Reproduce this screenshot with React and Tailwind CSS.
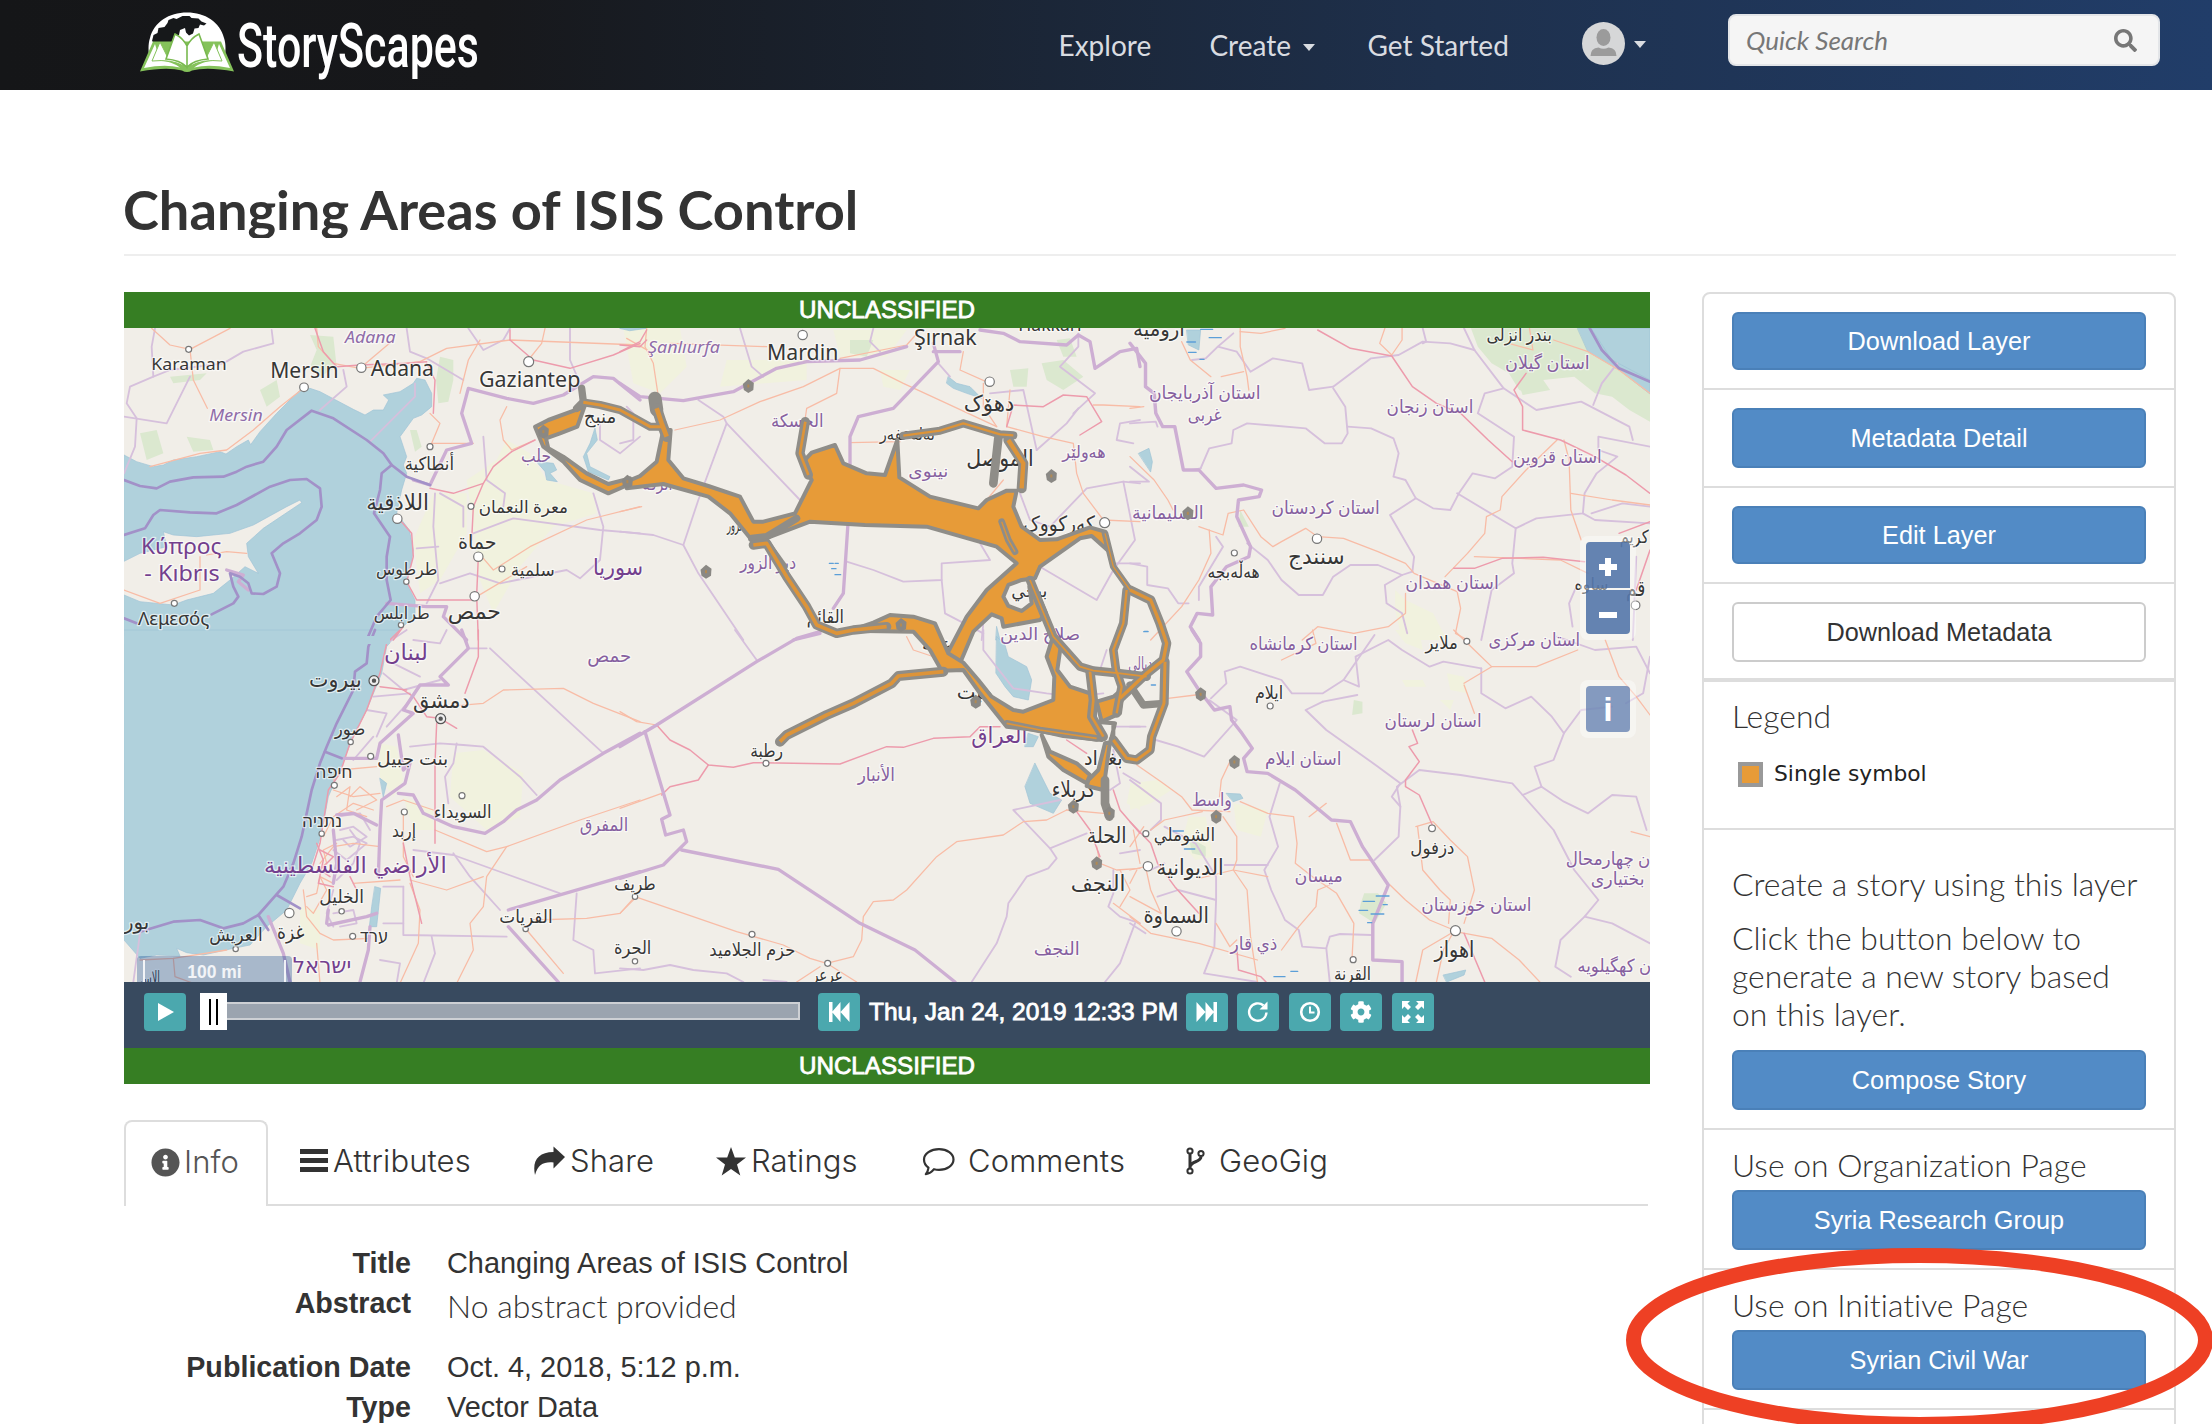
import React from "react";
import { FaCog, FaSearch, FaInfoCircle } from "react-icons/fa";

const HELV = "font-['Liberation_Sans',Arial,sans-serif]";
const LATO = "font-[Lato,sans-serif] [font-variant-ligatures:none]";
const THIN = "font-[Inter,'Liberation_Sans',sans-serif] font-light";

/* ---------- map data: six sheets, each with its own local units ---------- */

const SHEETS = {
  A: { x: 120, y: 280, sx: 1 / 3, sy: 1 / 3 },
  B: { x: 620, y: 280, sx: 1 / 3, sy: 1 / 3 },
  C: { x: 1130, y: 280, sx: 0.34439, sy: 1 / 3 },
  D: { x: 120, y: 630, sx: 1 / 3, sy: 1 / 3 },
  E: { x: 620, y: 630, sx: 1 / 3, sy: 1 / 3 },
  F: { x: 1130, y: 630, sx: 0.34439, sy: 1 / 3 },
};

const STYLES = {
  green: { fill: "#dbe8cf", stroke: "none" },
  pale: { fill: "#f1f2de", stroke: "none" },
  water: { fill: "#b0d1dc", stroke: "#9fc3d6", strokeWidth: 2 },
  land: { fill: "#f1eee8", stroke: "#9fc3d6", strokeWidth: 2 },
  orange: { fill: "none", stroke: "#f8bca6", strokeWidth: 3.8 },
  red: { fill: "none", stroke: "#ed9bac", strokeWidth: 4.4 },
  thin: { fill: "none", stroke: "#d6c0dc", strokeWidth: 5.5 },
  strong: { fill: "none", stroke: "#cdaed3", strokeWidth: 10 },
  sea: { fill: "none", stroke: "#a291c8", strokeWidth: 8 },
  marsh: { fill: "none", stroke: "#5c9fd8", strokeWidth: 4 },
};

const GEO = {
  A: {
    pale: ["1040,600 1130,540 1160,480 1230,520 1280,600 1420,640 1430,700 1300,740 1200,860 1120,1000 1080,900 1060,740", "880,780 940,640 1040,640 1040,760 960,900 900,940"],
    water: ["12,525 50,545 100,560 130,555 160,540 230,530 300,515 318,522 350,500 385,480 392,494 420,455 470,400 540,330 570,325 600,335 700,388 735,405 760,390 790,390 806,360 790,345 840,335 880,310 890,295 915,300 935,340 935,380 905,405 880,415 840,470 860,530 850,555 860,580 845,630 830,700 868,750 880,810 870,870 860,910 885,960 885,1010 835,1050 820,1080 12,1080", "1425,445 1432,480 1400,520 1410,560 1470,590 1465,600 1405,575 1390,530 1410,490", "1250,545 1300,550 1310,570 1290,580 1312,605 1280,600 1275,575"],
    land: ["0,850 60,820 140,800 130,755 160,765 230,770 330,760 400,735 500,680 540,660 545,668 430,745 380,790 385,830 415,880 375,860 330,900 280,940 200,960 160,975 60,965 0,940"],
    green: ["960,230 1000,240 1000,300 985,365 955,370 948,300", "570,165 640,170 650,260 600,290 570,260 590,210", "30,830 80,825 110,880 210,900 215,930 150,940 100,890 40,880", "420,330 470,300 480,350 440,380", "60,460 110,450 130,520 80,540", "200,470 270,480 280,510 220,515", "150,290 260,280 240,300 160,310", "870,450 890,450 905,500 885,515"],
    orange: ["95,145 150,195 210,208 330,145", "210,208 220,300 262,385", "590,145 595,200 640,250 720,265 900,245 980,205 1170,180 1560,195", "720,265 820,180", "1160,380 1140,420 1150,480 1175,510 1245,480", "930,400 960,430 935,490 1060,490", "90,560 240,520 320,510 400,450 480,380 550,325", "1090,835 1120,870 1230,800 1400,720 1560,680", "1070,950 1220,860", "1275,145 1265,190 1225,240", "12,930 120,970 240,930 240,830", "1080,180 1045,240 1020,340", "380,820 320,815 260,825"],
    red: ["585,145 610,215 650,260 720,255 860,250 920,245", "1170,150 1170,180 1240,240 1350,265 1480,225 1560,190", "920,250 945,300 940,400", "1175,515 1120,560 1090,610 1060,680 1055,780", "1090,610 1000,640 930,625", "1075,830 1070,945 1075,1080", "835,715 875,760 880,830 860,905 890,960 1065,960", "820,1080 850,1040", "1245,480 1175,515"],
    thin: ["105,145 95,200 100,290 30,320 20,370 50,415 45,500 12,580", "100,290 150,270 310,250 370,215 460,190 455,150", "12,410 140,430 165,380 210,290", "600,390 680,320 670,270", "750,485 885,350 885,310", "860,145 870,215 920,235 1030,300", "1045,145 1090,210 1150,180 1170,145", "1350,145 1350,240 1380,310", "1090,470 1100,600 1155,640 1150,680", "945,640 940,740 955,900 920,970", "890,805 955,800", "1060,760 1180,715 1440,750 1560,760", "1420,640 1450,740 1440,840 1380,895 1340,870 1140,910 1050,880 960,910", "1440,430 1440,480 1500,520 1560,470", "960,640 1030,680 1030,740"],
    strong: ["1560,360 1480,295 1420,290 1330,345 1240,370 1160,355 1045,325 1025,400 1055,490 980,510 930,615 880,600", "320,870 370,885 355,905 385,930", "800,970 920,980 980,980 970,1010 1040,1080"],
    sea: ["12,600 60,618 110,625 150,605 220,592 310,590 350,575 380,560 430,545 470,500 500,450 575,392 640,415 740,480 790,520 815,555 860,590 930,615", "12,765 75,745 100,705 120,690 210,697 290,700 350,675 450,620 510,600 560,597 600,625 605,680 590,720 540,760 490,790 455,820 480,880 470,920 430,942 395,940 385,910 360,890 330,880 340,920 355,950 340,970 275,1003", "815,555 785,580 780,630 762,700 810,770 800,830 800,900 812,960 770,1010 740,1080", "12,1015 50,1030"],
  },
  B: {
    pale: ["10,145 180,145 200,260 120,340 40,310", "320,240 560,240 560,300 300,320", "640,150 860,150 800,230 660,230", "780,270 870,270 840,330 790,320"],
    green: ["1170,270 1225,265 1220,320 1180,320", "1265,250 1330,240 1390,290 1330,330 1280,300", "690,180 760,180 740,230 690,220", "1310,180 1350,175 1370,230 1330,230"],
    water: ["985,290 1010,310 1050,320 1085,355 1040,340 1000,325 980,310", "0,145 80,145 30,152", "1130,1040 1140,1080 1128,1080"],
    orange: ["80,145 75,200 100,250 115,350", "165,450 300,420 420,365 550,320 660,265 760,265 850,310 980,370 1130,440", "660,265 650,340 560,385 555,420", "20,175 90,215", "150,190 440,200", "690,488 840,485", "1030,215 1020,270 1110,310", "1170,330 1160,440 1270,470 1360,490 1370,580 1390,640 1450,720", "1560,380 1450,375 1420,375", "0,695 65,680", "660,235 860,195 900,150", "1090,310 1090,380 1130,440", "1100,660 1150,600", "1450,720 1560,725"],
    red: ["0,215 60,185 80,150", "1160,440 1180,375 1270,380 1330,345 1400,350 1445,425 1380,465", "0,195 60,200 80,180"],
    thin: ["360,145 395,260 430,290", "235,360 310,410 320,430 540,660", "320,430 235,660 190,795", "0,755 100,765 190,795 235,880 370,1080", "680,845 760,870 850,905 965,900 965,850 1110,840 1080,790", "965,900 975,1000 1090,1060", "1250,510 1340,430 1375,385", "1250,510 1210,330 1110,340", "1375,160 1375,200 1320,260 1425,340 1360,400", "1200,640 1230,720 1290,740 1400,625 1510,605 1560,610", "1510,605 1545,780 1480,870 1430,960 1260,860", "760,145 750,185 780,215", "955,250 990,290", "1560,420 1500,430 1490,480 1540,490", "0,490 40,480 40,400 20,380", "1480,850 1560,850", "1085,1080 1090,1030"],
    strong: ["0,310 60,350 190,362 340,335 470,265 560,245 720,240 860,200", "940,190 955,245 820,385 715,410 690,470 690,640 670,940 640,985", "940,215 1020,215", "1080,150 1150,160 1200,185 1340,195 1375,165 1410,185 1425,265 1500,215 1550,205 1560,260", "520,1080 600,1060"],
    marsh: ["628,850 640,850", "645,850 655,850", "635,866 648,866", "645,884 662,884"],
  },
  C: {
    green: ["990,145 1300,145 1330,200 1420,260 1510,320 1510,425 1450,390 1400,350 1350,340 1290,290 1200,300 1160,340 1130,330 1100,280 1050,250 1010,200", "1125,300 1200,300 1220,330 1140,345", "320,690 345,740 315,740"],
    pale: ["770,930 800,960 880,1000 920,1080 790,1080 770,990"],
    water: ["1300,145 1510,145 1510,342 1420,270 1330,215", "165,150 205,150 200,210 170,195", "25,520 55,505 65,545 60,575", "1340,145 1510,145 1510,300 1400,240"],
    orange: ["150,185 175,240 235,290", "320,145 320,200 340,290 345,330", "265,290 330,275", "320,155 380,160 450,145", "740,145 725,190 760,225 790,180 790,145", "1230,180 1330,215 1420,270 1510,340", "0,530 70,600 110,660 125,690", "200,740 270,765 285,700 330,690 380,770 415,800 440,785 510,745 545,770 620,775 720,815 800,850 825,880 950,935 960,985 945,1060 980,1080", "915,890 980,820 1030,760 1035,710 1075,690 1080,650 1150,570 1240,480", "1260,480 1275,540 1280,690 1310,780", "1280,640 1400,660 1510,675", "800,940 800,1000 750,1040 650,1060 545,1040 500,1080", "230,750 235,820 200,900 150,980 60,1080", "0,385 40,380", "1000,830 1250,840 1330,880", "1100,190 1170,210 1160,145"],
    red: ["545,150 640,205 760,228 820,320 890,370 960,400 1040,480 1110,545", "1150,280 1115,330 1140,380 1140,450 1250,480 1350,530 1440,585 1510,640", "940,865 1000,865 1080,835 1200,832 1320,845", "1470,930 1510,810", "1420,760 1510,725"],
    thin: ["300,160 255,200 220,235 180,240", "255,200 310,215 350,275 415,235 500,250 520,330 590,320", "590,320 700,235 780,225 850,185 930,190 1000,210", "590,325 625,380 632,460 615,490 565,490 510,445 340,430 300,450 295,490 230,505 205,565", "632,440 700,445 765,475 780,520 765,590 800,600 830,655 755,705 825,830 820,875", "830,655 880,685 930,690 955,640 995,580 1060,595 1110,560 1115,470 1010,400 1030,340 1085,325", "1000,210 1085,325 1180,390 1310,365 1450,440 1460,480", "1345,375 1370,310 1415,250", "1510,500 1360,470 1360,510 1415,530 1355,580 1320,640 1315,700 1180,715 1120,745 950,640", "1340,700 1430,670 1510,680", "1120,745 1110,850 1115,880 1050,930 1020,1080", "340,790 400,840 440,900 490,945 560,945 590,890 640,855 720,855 790,885 820,875", "790,885 740,915 745,970 790,1000 805,1060", "0,850 50,860 50,915 110,925 140,970 170,970", "250,770 270,800 200,920 200,960", "0,605 55,605 0,560", "1285,1040 1275,970 1300,910", "1470,830 1460,1080", "850,145 860,185 850,190", "205,565 180,570", "1315,700 1350,720 1510,730", "970,145 1000,210", "0,430 75,425 80,440"],
    strong: ["0,190 45,250 45,320 70,340 75,400 95,440 130,440 155,570 200,570 250,625 330,615 382,630 375,650 315,660 310,710 350,800 345,830 280,860 235,920 240,1005 195,1000 175,1040 200,1080"],
    sea: ["1335,145 1370,210 1420,265 1510,305"],
    marsh: ["205,148 240,148", "230,173 265,173", "165,186 190,186", "170,217 192,217", "203,238 215,238", "42,1054 52,1054"],
  },
  D: {
    pale: ["780,340 830,350 850,450 820,500 780,440", "1000,370 1090,360 1210,430 1200,560 1100,600 990,500", "850,500 940,540 940,600 880,600", "540,830 600,840 600,960 540,940"],
    water: ["12,0 840,0 800,50 785,130 740,240 700,320 655,430 625,500 605,610 575,700 540,760 500,840 440,890 390,945 340,955 250,975 200,968 170,955 180,978 110,975 60,985 12,930", "780,445 800,460 790,500", "765,770 782,775 770,890 748,890 755,830"],
    orange: ["945,600 1100,665 1160,650 1380,570 1560,510", "1160,650 1100,740 1090,830 1050,880 1060,960 1010,1060", "870,760 900,840 895,940 840,1060", "1550,800 1500,850 1400,865 1240,870", "1220,900 1330,1030", "975,230 1090,220 1150,180 1330,175 1420,220 1560,275", "640,480 700,500 780,490", "610,620 640,560 700,520 760,540", "550,780 560,860 600,910 640,930 750,925", "600,740 620,780 580,850 560,830", "640,450 660,420 770,410", "850,540 850,680 880,740", "600,700 640,650 700,640 780,650", "870,750 980,780 1090,740", "800,530 850,510 940,540", "60,990 160,985 320,960", "160,985 165,1040 220,1060", "690,500 720,470 770,510 710,540", "590,940 600,1060", "700,760 840,750", "650,500 690,470 680,540 740,560", "590,720 620,700 610,660 650,640", "560,800 590,790 600,740 640,760"],
    red: ["1075,0 1075,80 1035,190", "840,0 800,40 780,130 740,240 690,340 660,430 625,480 600,640 575,720", "950,280 945,400 945,640", "590,640 610,690 595,760 640,770", "850,640 870,740 905,880", "850,180 880,200 920,260 960,265 1010,295", "690,740 710,780 700,760", "780,170 860,180", "600,660 640,680 600,720 630,740"],
    thin: ["1110,55 1190,130 1450,370", "1045,55 1100,55", "790,130 850,180 960,150", "870,350 960,340 1030,345 1090,350 1200,440 1250,495", "1010,340 1000,400 975,440 985,520", "740,240 800,250 770,320", "880,200 800,290", "880,660 1000,675 1320,790", "1000,670 1050,740 1140,840", "850,770 850,915 1160,920", "935,920 945,970 910,1060", "790,770 850,770", "790,880 850,880", "1370,790 1360,930 1420,960 1425,1030 1560,1015", "650,560 720,550 750,600", "650,630 700,620 740,640 680,690 640,660", "640,780 620,850 640,890", "690,600 720,640 700,700 650,750", "700,390 760,320", "40,1056 60,910", "780,990 840,1000 830,1060", "800,40 860,0", "880,30 960,40 980,0", "820,100 900,140", "760,200 870,190", "640,850 700,840 710,880 660,890", "660,600 700,590 740,620 690,650 670,630"],
    strong: ["1025,0 1045,55 960,140 985,165 900,165 850,240 880,250 780,340 770,385 670,385", "835,315 850,420 870,400 855,460 785,510 780,600 775,740", "835,490 880,495 910,550 1000,590 1095,610 1150,575 1190,540 1250,510 1320,450 1450,370 1560,310", "625,885 740,860 770,850", "650,555 700,550 770,585", "750,890 745,960 720,1056", "1560,725 1165,840", "1165,890 1315,1056", "445,860 490,970 510,1056", "640,600 650,700 640,760", "620,880 625,840"],
    sea: ["765,0 745,50 740,100 705,125 700,180 650,280 620,350 600,400 575,480 545,620 520,700 490,770 415,855 370,880 310,895 240,870 160,875 60,905", "615,365 665,385", "470,795 540,835", "415,855 445,900"],
  },
  E: {
    water: ["1130,20 1155,45 1165,80 1220,110 1235,150 1225,210 1180,200 1155,170 1128,130", "1245,400 1265,440 1290,490 1325,510 1300,550 1230,520 1215,470", "1225,310 1255,320 1240,350 1215,350"],
    pale: ["1530,470 1560,480 1560,540 1520,520"],
    orange: ["0,245 50,275 110,285", "0,535 125,490", "45,800 350,905 490,945 570,985 620,1000", "0,850 45,800", "620,1000 700,980 725,930 730,860 760,815 820,810 860,780 950,680 1010,635 1150,615 1210,575 1280,570 1340,540", "620,1000 710,1056", "600,1010 530,1056", "1430,650 1440,700 1490,720 1560,715", "1480,820 1560,880", "860,20 880,60 970,90", "1340,540 1450,550", "1500,720 1530,780 1500,830", "1540,600 1560,700"],
    red: ["110,285 150,330 210,360 265,405 340,412 400,398 520,400 660,402 800,350 850,352 940,325 1050,320 1080,290 1140,290", "265,405 235,450 150,470 125,495", "1370,545 1410,600 1440,680", "1480,480 1500,540 1560,610", "1340,330 1400,370"],
    thin: ["345,0 410,90", "1090,0 1090,60 1180,175 1280,190 1360,200 1450,190", "1320,510 1180,540 1290,655 1310,685 1285,715 1220,740 1165,820 1160,860 1130,940 1055,1056", "1290,655 1400,610", "1545,880 1500,1000 1455,1056", "1480,720 1480,790 1465,830 1500,860 1560,880", "0,1015 70,1020 150,1005 220,1020 320,1030 370,1056", "430,1050 500,1056", "1480,360 1500,460 1470,480", "1490,290 1560,290", "1510,430 1560,460", "1440,120 1460,60", "1500,670 1560,660"],
    strong: ["0,350 110,285 410,95 530,25 600,5", "75,305 150,555 125,568 137,615 190,600 200,635 130,705 0,745", "185,660 475,718 720,880 885,960 1005,1056"],
  },
  F: {
    pale: ["0,460 80,450 120,480 60,520 0,540", "170,560 220,560 240,680 190,690 150,640", "790,150 850,150 860,170 800,170", "770,0 840,0 850,60 800,40", "920,130 970,140 980,190 930,180", "900,210 940,210 930,240", "300,520 400,540 380,620 310,600"],
    green: ["680,790 720,790 745,820 710,880 665,850 670,820", "650,210 675,215 675,250 645,255", "170,620 220,650 220,680 180,670"],
    water: ["280,490 320,492 328,505 300,515", "910,1035 975,1020 970,1035 920,1056"],
    orange: ["110,205 190,195", "20,405 90,455 150,500 180,540 290,545", "290,395 265,450 260,500", "210,545 100,570 60,600", "270,560 310,620 310,690 300,720 340,780 350,920 370,1056", "320,515 400,550 475,560 485,640 480,700 530,740 600,790 650,880 645,980", "200,745 300,720 400,740", "440,960 490,890 540,830 545,780 580,765", "830,590 880,575 930,630 980,680 1000,780 970,880", "835,590 850,720 900,780 930,810 925,880", "755,765 800,810 870,870 940,900", "940,905 850,960 830,1056", "945,905 1050,925 1130,990 1190,1056", "940,905 910,960 890,1056", "970,160 1050,110 1180,110 1300,60", "1000,250 970,165", "1380,30 1420,140 1470,200 1510,255", "0,720 45,710 60,780 90,850", "90,850 0,800", "530,0 540,40 440,90", "1455,605 1510,620", "600,580 640,690 700,690", "0,860 60,910 200,940 370,990", "940,0 1000,60 1050,110", "40,590 0,650", "520,560 570,520", "20,720 0,760", "250,880 290,950 310,930"],
    red: ["820,300 835,340 810,350 840,395 800,450 800,470 840,495 880,590", "0,575 60,640 80,700 130,770 200,850", "310,950 315,1020 380,1040 395,1056", "970,910 1030,1056"],
    thin: ["230,210 310,270 215,380 140,350 75,330", "235,205 280,160 275,125 320,110 440,150 470,190 560,190 620,150 665,170 655,80 750,30 790,60 870,110 910,95 1020,115", "710,15 680,60 620,150", "560,215 510,240 570,300 720,410 785,460 760,500 785,530 780,620 710,690", "560,215 660,195", "785,530 775,470 840,420 960,435 1110,460 1140,495 1195,470 1260,515 1330,550 1400,495 1470,500 1500,600", "1140,495 1230,600 1290,720 1360,810 1320,860 1250,930 1235,1010 1280,1040", "1320,860 1400,880 1510,940", "1195,470 1175,410 1230,390 1260,310 1225,260 1165,200 1090,235 1020,190 1020,115", "1260,310 1310,240 1400,230", "435,460 405,560 430,650 390,720 410,780 450,870 490,900 500,950 570,955 580,1056", "275,705 400,705", "570,955 580,920 610,912 700,915", "60,720 100,700", "80,800 140,780 250,810 245,950 215,1030 370,1056", "0,450 90,520 90,570 60,600", "250,810 250,740 190,640 100,590", "0,290 45,290", "45,910 0,880", "1510,80 1490,190 1440,220", "1050,930 1020,0", "1240,20 1350,60 1470,50 1510,130"].filter((p) => p !== "1050,930 1020,0"),
    strong: ["180,0 205,40 205,80 165,125 200,180 245,240 290,230 295,270 325,310 355,355 330,385 340,425 400,430 480,480 585,570 640,575 675,650 750,765 705,880 705,990 790,995 790,1056"],
    marsh: ["125,603 155,603", "158,657 188,657", "677,814 710,814", "715,798 752,798", "735,824 747,824", "665,841 690,841", "700,852 737,852", "690,878 702,878", "467,1024 487,1024", "418,1040 450,1040", "40,5 52,5", "62,165 74,165"],
  },
};

const ORDER = ["pale", "green", "water", "land", "thin", "orange", "red", "strong", "sea", "marsh"];
const CLOSED = new Set(["pale", "green", "water", "land"]);

/* control areas, in sheet B units */
const AREAS = [
  "20,605 60,588 110,545 130,450 152,450 145,540 190,595 265,618 360,650 400,725 430,725 525,700 575,600 545,550 575,518 645,495 670,550 740,580 795,585 832,480 838,592 930,650 1075,685 1100,660 1160,632 1190,632 1180,680 1205,740 1260,780 1310,778 1410,742 1455,755 1462,810 1415,768 1380,775 1260,860 1245,895 1205,900 1165,915 1150,950 1165,978 1205,993 1235,970 1228,920 1250,935 1278,1000 1260,1020 1150,1040 1145,1015 1115,1003 1060,1055 1020,1150 965,1150 985,1115 1040,1010 1100,930 1190,850 1130,800 920,740 735,735 570,725 430,778 395,780 330,700 265,650 130,612 20,625",
  "690,1052 760,1028 810,1005 880,1010 945,1030 985,1120 1030,1148 1075,1200 1115,1250 1180,1290 1210,1295 1300,1260 1303,1190 1280,1130 1300,1065 1322,1100 1312,1170 1350,1220 1425,1245 1425,1320 1445,1380 1330,1368 1250,1350 1160,1340 1080,1240 1030,1170 965,1172 930,1110 880,1055",
  "1430,1265 1480,1250 1510,1225 1500,1300 1445,1325",
  "1425,1325 1480,1330 1480,1385 1455,1390 1435,1470 1405,1500 1400,1518 1450,1530 1468,1400 1485,1330",
  "1265,1365 1290,1415 1370,1450 1410,1485 1400,1510 1330,1470 1285,1430",
  "-255,440 -215,420 -120,385 -105,375 -128,440 -180,460 -222,475 -215,505 -170,530 -100,580 -35,612 30,595 30,612 -35,640 -120,600 -170,545 -230,500",
];
const BANDS = [
  { p: "-115,325 -110,365 -130,385", w: 22, i: 0 },
  { p: "-110,367 -60,375 0,390 90,440 130,440", w: 24, i: 9 },
  { p: "105,355 110,390", w: 40, i: 0 },
  { p: "110,385 125,430 140,470", w: 32, i: 14 },
  { p: "556,425 540,520 565,585", w: 28, i: 8 },
  { p: "395,775 440,770 530,715", w: 22, i: 0 },
  { p: "400,795 440,790 500,890 560,980 590,1035 650,1060 700,1050 800,1040", w: 28, i: 11 },
  { p: "440,790 490,860", w: 24, i: 0 },
  { p: "850,467 960,452 1030,430 1140,463 1180,466", w: 24, i: 7 },
  { p: "1135,475 1120,610", w: 26, i: 0 },
  { p: "1165,480 1210,550 1205,625", w: 30, i: 13 },
  { p: "1145,725 1165,780 1185,815", w: 20, i: 4 },
  { p: "480,1385 500,1365 620,1305 700,1270 815,1210 835,1188 970,1175", w: 30, i: 11 },
  { p: "480,1385 500,1365 610,1310", w: 26, i: 0 },
  { p: "1455,760 1480,860 1530,930", w: 20, i: 4 },
  { p: "1520,930 1510,1030 1480,1110 1488,1170 1505,1220 1490,1300", w: 26, i: 7 },
  { p: "1530,930 1592,960 1620,1030 1640,1090 1630,1140 1580,1180 1500,1255", w: 28, i: 10 },
  { p: "1635,1145 1632,1270 1595,1370 1590,1410 1550,1440 1520,1435 1480,1380", w: 28, i: 9 },
  { p: "1230,900 1275,1010 1300,1070 1380,1160 1420,1172 1500,1180 1580,1190", w: 26, i: 5 },
  { p: "1410,1175 1420,1260 1415,1310 1450,1370", w: 28, i: 8 },
  { p: "1530,1215 1570,1275 1632,1270", w: 22, i: 0 },
  { p: "1455,1500 1455,1570 1468,1610", w: 26, i: 0 },
  { p: "1160,1330 1260,1350 1430,1375", w: 20, i: 5 },
];
const SPOTS = [
  ["B", 385, 318], ["B", 258, 875], ["B", 1294, 588], ["B", 843, 1035], ["C", 168, 700], ["E", 1067, 215], ["E", 1360, 530],
  ["E", 1430, 700], ["E", 1468, 550], ["F", 205, 193], ["F", 303, 396], ["F", 250, 560], ["A", 1270, 455], ["A", 1522, 605],
];

/* places: sheet, x, y, radius */
const PLACES = [
  ["A", 206, 208, 9], ["A", 552, 322, 13], ["A", 724, 263, 14], ["A", 1226, 245, 15], ["A", 930, 500, 9], ["A", 832, 716, 14],
  ["A", 1053, 679, 9], ["A", 1075, 830, 14], ["A", 1146, 867, 9], ["A", 859, 905, 8], ["A", 1064, 949, 14], ["A", 163, 970, 9], ["A", 843, 1035, 8],
  ["B", 548, 165, 14], ["B", 1109, 305, 14], ["B", 1454, 728, 15], ["C", 543, 776, 14], ["C", 303, 819, 9], ["C", 1468, 976, 13],
  ["D", 692, 336, 8], ["D", 752, 379, 9], ["D", 643, 466, 9], ["D", 1026, 497, 9], ["D", 853, 546, 9], ["D", 605, 611, 8], ["D", 665, 844, 8],
  ["D", 508, 849, 14], ["D", 698, 919, 9], ["D", 347, 957, 8], ["D", 1545, 800, 8], ["D", 1217, 897, 8], ["D", 1545, 994, 8],
  ["E", 438, 400, 9], ["E", 396, 913, 9], ["E", 623, 1000, 9], ["F", 978, 34, 9], ["F", 407, 228, 9], ["F", 877, 595, 10], ["F", 46, 611, 9],
  ["F", 52, 709, 14], ["F", 135, 904, 14], ["F", 945, 902, 15], ["F", 648, 989, 9],
];

/* labels: sheet, text, centre x, baseline, width, font size, kind (c city, p province, i italic, n nation) */
const LABELS = [
  ["A", "Karaman", 207, 267, 226, 17, "c"], ["A", "Mersin", 553, 292, 205, 22, "c"], ["A", "Adana", 847, 287, 190, 22, "c"],
  ["A", "Adana", 751, 186, 152, 17, "i"], ["A", "Mersin", 348, 422, 160, 17, "i"], ["A", "Gaziantep", 1229, 318, 304, 21, "c"],
  ["A", "منبج", 1440, 428, 98, 18, "c"], ["A", "أنطاكية", 928, 568, 148, 18, "c"], ["A", "حلب", 1248, 545, 90, 18, "p"],
  ["A", "اللاذقية", 833, 688, 188, 22, "c"], ["A", "معرة النعمان", 1210, 697, 268, 17, "c"], ["A", "حماة", 1072, 804, 116, 20, "c"],
  ["A", "Κύπρος", 184, 820, 242, 22, "n"], ["A", "- Kıbrıs", 186, 900, 226, 22, "n"], ["A", "طرطوس", 860, 882, 184, 17, "c"],
  ["A", "سلمية", 1238, 887, 132, 17, "c"], ["A", "سوريا", 1494, 882, 150, 22, "n"], ["A", "Λεμεσός", 161, 1032, 214, 18, "c"],
  ["A", "طرابلس", 845, 1014, 168, 17, "c"], ["A", "حمص", 1063, 1014, 160, 22, "c"],
  ["B", "Şanlıurfa", 192, 218, 216, 17, "i"], ["B", "Mardin", 548, 238, 214, 21, "c"], ["B", "Şırnak", 976, 192, 188, 21, "c"],
  ["B", "Hakkâri", 1290, 152, 190, 20, "c"], ["B", "دهۆک", 1107, 390, 152, 22, "c"], ["B", "الحسكة", 532, 440, 158, 18, "p"],
  ["B", "تەلەعفەر", 862, 478, 165, 17, "c"], ["B", "نينوى", 925, 588, 120, 17, "p"], ["B", "الموصل", 1140, 556, 202, 23, "c"],
  ["B", "هەولێر", 1392, 532, 130, 17, "p"], ["B", "الرقة", 112, 628, 90, 17, "p"], ["B", "دير الزور", 366, 750, 90, 17, "c"],
  ["B", "کەرکووک", 1317, 752, 215, 21, "c"], ["B", "دير الزور", 444, 864, 168, 18, "p"], ["B", "بيجي", 1228, 948, 108, 18, "c"],
  ["B", "القائم", 616, 1028, 112, 19, "c"], ["B", "صلاح الدين", 1260, 1078, 240, 17, "p"],
  ["C", "ارومیه", 84, 166, 150, 20, "c"], ["C", "بندر انزلی", 1130, 182, 190, 18, "c"], ["C", "استان گیلان", 1212, 266, 246, 18, "p"],
  ["C", "استان آذربایجان", 217, 356, 324, 18, "p"], ["C", "غربی", 217, 420, 98, 18, "p"], ["C", "استان زنجان", 871, 398, 252, 18, "p"],
  ["C", "استان قزوین", 1241, 546, 258, 18, "p"], ["C", "السليمانية", 110, 714, 208, 18, "p"], ["C", "استان کردستان", 568, 700, 314, 18, "p"],
  ["C", "سنندج", 541, 850, 164, 22, "c"], ["C", "هەڵەبجە", 301, 892, 152, 18, "c"], ["C", "استان همدان", 935, 926, 272, 18, "p"],
  ["C", "کریم", 1464, 786, 84, 18, "c"], ["C", "قم", 1468, 946, 56, 22, "c"], ["C", "ساوه", 1340, 928, 98, 17, "c"],
  ["D", "لبنان", 858, 88, 132, 22, "n"], ["D", "بيروت", 646, 168, 158, 22, "c"], ["D", "حمص", 1468, 94, 132, 18, "p"],
  ["D", "دمشق", 964, 232, 170, 22, "c"], ["D", "صور", 690, 314, 92, 18, "c"], ["D", "بنت جبيل", 878, 404, 214, 18, "c"],
  ["D", "חיפה", 642, 442, 112, 19, "c"], ["D", "السويداء", 1028, 562, 174, 18, "c"],
  ["D", "נתניה", 606, 588, 122, 19, "c"], ["D", "إربد", 852, 618, 72, 18, "c"], ["D", "المفرق", 1452, 602, 146, 18, "p"],
  ["D", "الأراضي الفلسطينية", 706, 726, 548, 22, "n"], ["D", "الخليل", 665, 818, 134, 18, "c"], ["D", "القريات", 1218, 876, 160, 18, "c"],
  ["D", "بور", 50, 896, 76, 20, "c"], ["D", "العريش", 348, 932, 160, 18, "c"], ["D", "غزة", 512, 924, 82, 20, "c"],
  ["D", "ערד", 762, 934, 86, 19, "c"], ["D", "ישראל", 606, 1028, 176, 22, "n"], ["D", "الإس", 90, 1062, 60, 20, "c"],
  ["E", "رطبة", 440, 380, 98, 18, "c"], ["E", "الأنبار", 769, 450, 112, 18, "p"], ["E", "هيت", 1064, 204, 108, 20, "c"],
  ["E", "العراق", 1138, 336, 168, 22, "n"], ["E", "بغداد", 1450, 402, 116, 20, "c"], ["E", "كربلاء", 1361, 500, 132, 22, "c"],
  ["E", "الحلة", 1460, 638, 120, 22, "c"], ["E", "النجف", 1434, 782, 164, 22, "c"], ["E", "النجف", 1310, 974, 138, 18, "p"],
  ["E", "طريف", 45, 778, 124, 18, "c"], ["E", "حزم الجلاميد", 397, 976, 258, 18, "c"], ["E", "الحرة", 38, 970, 112, 18, "c"],
  ["E", "عرعر", 622, 1050, 92, 18, "c"], ["E", "عنه", 950, 58, 90, 17, "c"],
  ["F", "استان کرمانشاه", 504, 58, 314, 18, "p"], ["F", "ملایر", 905, 54, 94, 18, "c"], ["F", "استان مرکزی", 1174, 46, 266, 18, "p"],
  ["F", "ایلام", 404, 204, 82, 18, "c"], ["F", "استان لرستان", 880, 290, 282, 18, "p"], ["F", "استان ایلام", 503, 404, 222, 18, "p"],
  ["F", "واسط", 238, 526, 116, 18, "p"], ["F", "الشوملي", 158, 630, 178, 18, "c"], ["F", "الديوانية", 174, 734, 196, 22, "c"],
  ["F", "دزفول", 878, 670, 128, 18, "c"], ["F", "میسان", 548, 754, 140, 18, "p"], ["F", "السماوة", 134, 876, 190, 22, "c"],
  ["F", "استان خوزستان", 1006, 840, 320, 18, "p"], ["F", "ذي قار", 360, 958, 136, 18, "p"], ["F", "اهواز", 942, 980, 116, 22, "c"],
  ["F", "القرنة", 646, 1048, 108, 18, "c"], ["F", "ن چهارمحال", 1388, 702, 246, 18, "p"], ["F", "بختیاری", 1416, 764, 156, 18, "p"],
  ["F", "ن کهگیلویه", 1406, 1024, 214, 18, "p"], ["F", "ديالى", 30, 118, 70, 18, "p"],
];

const LABEL_COLOR = { c: "#363636", p: "#8660a0", i: "#8f6ca9", n: "#733f8e" };

function at(sheet, x, y) {
  const s = SHEETS[sheet];
  return [s.x + x * s.sx, s.y + y * s.sy];
}

function MapCanvas() {
  return (
    <svg className="block h-[654px] w-[1526px]" viewBox="124 328 1526 654" strokeLinejoin="round" strokeLinecap="round">
      <rect x="124" y="328" width="1526" height="654" fill="#f1eee8" />
      {ORDER.map((kind) =>
        Object.keys(SHEETS).map((id) => {
          const s = SHEETS[id];
          return (
            <g key={kind + id} transform={`translate(${s.x} ${s.y}) scale(${s.sx} ${s.sy})`} {...STYLES[kind]}>
              {(GEO[id][kind] || []).map((pts, i) =>
                CLOSED.has(kind) ? <polygon key={i} points={pts} /> : <polyline key={i} points={pts} />
              )}
            </g>
          );
        })
      )}
      {/* the sea continues across the sheet boundary */}
      <rect x="124" y="636" width="266" height="8" fill="#b0d1dc" />
      {PLACES.map(([s, x, y, r], i) => {
        const [cx, cy] = at(s, x, y);
        return <circle key={i} cx={cx} cy={cy} r={r / 3} fill="#fff" stroke="#777" strokeWidth="1.2" />;
      })}
      {[["D", 762, 152], ["D", 962, 266]].map(([s, x, y]) => {
        const [cx, cy] = at(s, x, y);
        return (
          <g key={x} fill="#eee" stroke="#555" strokeWidth="1.2">
            <circle cx={cx} cy={cy} r="5" />
            <circle cx={cx} cy={cy} r="1.6" fill="#555" />
          </g>
        );
      })}
      {LABELS.map(([s, text, x, y, w, size, kind], i) => {
        const [cx, by] = at(s, x, y);
        return (
          <text
            key={i}
            x={cx}
            y={by + 0.8}
            textAnchor="middle"
            textLength={w * SHEETS[s].sx}
            lengthAdjust="spacingAndGlyphs"
            fontSize={size}
            fontStyle={kind === "i" ? "italic" : "normal"}
            fill={LABEL_COLOR[kind]}
            stroke="#ffffff"
            strokeOpacity="0.6"
            strokeWidth="2.6"
            paintOrder="stroke"
            className="font-['Noto_Sans','DejaVu_Sans',sans-serif]"
          >
            {text}
          </text>
        );
      })}
      <g transform="translate(620 280) scale(.33333)">
        <g fill="#e79b38" stroke="#8f8d88" strokeWidth="12">
          {AREAS.map((p, i) => (
            <polygon key={i} points={p} />
          ))}
        </g>
        <g fill="none" stroke="#8f8d88">
          {BANDS.map((b, i) => (
            <polyline key={i} points={b.p} strokeWidth={b.w} />
          ))}
        </g>
        <g fill="none" stroke="#dd9439" strokeLinecap="butt">
          {BANDS.filter((b) => b.i > 0).map((b, i) => (
            <polyline key={i} points={b.p} strokeWidth={b.i} />
          ))}
        </g>
      </g>
      {SPOTS.map(([s, x, y], i) => {
        const [cx, cy] = at(s, x, y);
        return (
          <g key={i}>
            <polygon points={`${cx - 5.5},${cy - 2} ${cx},${cy - 7} ${cx + 5.5},${cy - 3} ${cx + 5},${cy + 4} ${cx},${cy + 7} ${cx - 4.5},${cy + 4}`} fill="#8a8884" />
            <rect x={cx - 1} y={cy - 1.5} width="2" height="3" fill="#b08a55" />
          </g>
        );
      })}
    </svg>
  );
}

/* ---------- icons ---------- */

function Logo() {
  return (
    <svg className="block h-[90px] w-[360px] overflow-visible" viewBox="130 0 360 90">
      <path d="M150 60C148 52 148 44 150 38C154 22 169 12.500 187 12.500S220 22 224 38C226 44 226 52 224 60Z" fill="#fff" />
      <g fill="#16181a">
        <path d="M152 41l1.500-6 4-2 1-5 6-1 3-4 1-3 5-2 3 1 6-3 7 0 2 2 7 .5 3 3 5 2-2.500 2-4-1-1.500 3.500-4 .5-1.500 5-4 2-3-3-1-4.500-5 2-1 5-5 2-2 5-5 1.500-6 5-4-1-2-4z" />
        <path d="M210.500 46l4 .5 3.500 4-4.500-.5z" />
      </g>
      <path d="M153 41.500L140 71.500q27-5 42-1 5 3 10 0 15-4 42 1L221 41.500z" fill="#85c25b" />
      <path d="M155 44l-11 24q21-4 36-.5q-8-6-20-7zM219 44l11 24q-21-4-36-.5q8-6 20-7z" fill="#fff" />
      <path d="M160 42l-8 19q19-2 32 5q-5-8-17-10zM214 42l8 19q-19-2-32 5q5-8 17-10z" fill="#fff" stroke="#85c25b" strokeWidth="1" />
      <path d="M175 34L166 59q14 1 21 8V46q-4-8-12-12zM199 34l9 25q-14 1-21 8V46q4-8 12-12z" fill="#fff" stroke="#79b94f" strokeWidth="1.600" />
      <text x="237" y="66.500" fontSize="61" fontWeight="500" fill="#fff" textLength="242" lengthAdjust="spacingAndGlyphs" className="font-[Roboto,sans-serif]">
        StoryScapes
      </text>
    </svg>
  );
}

const Caret = () => (
  <svg className="block h-[7px] w-[12px]" viewBox="0 0 12 7"><path d="M0 0h12L6 7z" fill="#d9dce1" /></svg>
);

function Avatar() {
  return (
    <svg className="block size-[43px]" viewBox="0 0 43 43">
      <circle cx="21.500" cy="21.500" r="21.500" fill="#d6d7d8" />
      <ellipse cx="21.500" cy="15.500" rx="7" ry="8.500" fill="#9b9b9b" />
      <path d="M8.500 34q0-8 8-8.500q5 2.500 10 0q8 .5 8 8.500z" fill="#9b9b9b" />
    </svg>
  );
}

const Skip = ({ flip }) => (
  <svg className={flip ? "size-[22px] -scale-x-100" : "size-[22px]"} viewBox="0 0 22 22" fill="#fff">
    <path d="M1 1h3.500v20H1zM12.500 1v20L4 11zM21.500 1v20L12.500 11z" />
  </svg>
);
const Reload = () => (
  <svg className="size-[24px]" viewBox="0 0 24 24">
    <path d="M20.500 12.500A8.700 8.700 0 1 1 17.500 5.500" fill="none" stroke="#fff" strokeWidth="2.400" />
    <path d="M21.500 1.500v8H13.500z" fill="#fff" />
  </svg>
);
const Clock = () => (
  <svg className="size-[24px]" viewBox="0 0 24 24" fill="none" stroke="#fff">
    <circle cx="12" cy="12" r="8.800" strokeWidth="2.600" />
    <path d="M12 6.500V12.500h4.500" strokeWidth="2" />
  </svg>
);
const Expand = () => (
  <svg className="size-[24px]" viewBox="0 0 24 24" fill="#fff">
    {[0, 90, 180, 270].map((a) => (
      <path key={a} transform={`rotate(${a} 12 12)`} d="M1 1h8L6.500 3.500l3.500 3.500-3 3-3.500-3.500L1 9z" />
    ))}
  </svg>
);
const Bars = () => (
  <svg className="h-[24px] w-[28px]" viewBox="0 0 28 24" fill="#333">
    <path d="M0 0h28v5H0zM0 9h28v5H0zM0 18h28v5H0z" />
  </svg>
);
const ShareArrow = () => (
  <svg className="h-[30px] w-[32px]" viewBox="0 0 32 30" fill="#333">
    <path d="M20.500 0.500L32 11 20.500 22.500V16.500C11 15.500 5 18.500 2 29C-1 15 5 6 20.500 6z" />
  </svg>
);
const Star = () => (
  <svg className="h-[29px] w-[30px]" viewBox="0 0 30 29" fill="#333">
    <path d="M15 0l3.800 10.500H30l-9 7 3.300 11L15 22l-9.300 6.500 3.300-11-9-7h11.200z" />
  </svg>
);
const Bubble = () => (
  <svg className="h-[29px] w-[33px]" viewBox="0 0 33 29" fill="none" stroke="#333" strokeWidth="2.200">
    <path d="M17 2.200c8.200 0 14.500 4.600 14.500 10.300S25.200 22.800 17 22.800c-1.800 0-3.400-.2-5-.6-2 2.600-4.800 4.600-8.200 5 1.600-1.800 2.400-4.200 2.700-6.600C3.700 18.700 2 15.800 2 12.500 2 6.800 8.800 2.200 17 2.200z" strokeLinejoin="round" />
  </svg>
);
const Branch = () => (
  <svg className="h-[28px] w-[19px]" viewBox="0 0 19 28" fill="none" stroke="#333" strokeWidth="2">
    <circle cx="4" cy="4" r="2.600" /><circle cx="15" cy="6.500" r="2.600" /><circle cx="4" cy="24" r="2.600" />
    <path d="M4 7v14M15 9.500c0 6-10.500 4.500-10.500 10" strokeWidth="3" />
  </svg>
);

/* ---------- parts ---------- */

function Header() {
  return (
    <header className={`flex h-[90px] shrink-0 items-center bg-[linear-gradient(90deg,#151618_0%,#17181b_22%,#1a2331_42%,#1e304c_65%,#213d69_100%)] text-[28px] text-[#d9dce1] ${LATO}`}>
      <div className="w-[1058.500px] shrink-0 pl-[130px]"><Logo /></div>
      <a className="w-[151px] shrink-0 leading-[91px]">Explore</a>
      <a className="flex w-[158px] shrink-0 items-center gap-[12px] leading-[91px]">Create <span className="pt-[5px]"><Caret /></span></a>
      <a className="w-[214.500px] shrink-0 leading-[91px]">Get Started</a>
      <div className="flex w-[146px] shrink-0 items-center gap-[9px] pb-[4px]"><Avatar /><span className="pt-[3px]"><Caret /></span></div>
      <div className="mb-[10px] flex h-[52px] w-[432px] shrink-0 items-center justify-between rounded-[8px] border-2 border-[#e3e5e8] bg-[#f5f5f5] pr-[21px] pl-[16px] text-[26px] text-[#777] italic">
        <span>Quick Search</span>
        <FaSearch className="size-[23px]" />
      </div>
    </header>
  );
}

function Banner() {
  return (
    <div className={`h-[36px] bg-[#367e23] text-center text-[24.200px] leading-[35px] text-white [-webkit-text-stroke:0.8px_white] ${HELV}`}>
      UNCLASSIFIED
    </div>
  );
}

function Tool({ children }) {
  return <button className="flex h-[38px] w-[42px] shrink-0 items-center justify-center rounded-[4px] bg-[#4ba8ae] text-white">{children}</button>;
}

function Playback() {
  return (
    <div className="flex h-[66px] items-start bg-[#384a5f] pt-[11px] pl-[20px]">
      <Tool><svg className="ml-[2px] size-[20px]" viewBox="0 0 20 20"><path d="M2 1l16 9-16 9z" fill="#fff" /></svg></Tool>
      <div className="ml-[14px] flex h-[37px] w-[27px] items-center justify-center gap-[5px] bg-white">
        <span className="h-[26px] w-[2px] bg-black" /><span className="h-[26px] w-[2px] bg-black" />
      </div>
      <div className="mt-[9px] h-[18px] w-[573px] border-2 border-l-0 border-[#cdd0d4] bg-[#9ba4af]" />
      <div className="ml-[18px]"><Tool><Skip /></Tool></div>
      <div className={`w-[326px] shrink-0 pl-[9px] text-[24.500px] leading-[37px] whitespace-nowrap text-white [-webkit-text-stroke:0.8px_white] ${HELV}`}>
        Thu, Jan 24, 2019 12:33 PM
      </div>
      <div className="flex gap-[9.400px]">
        <Tool><Skip flip /></Tool>
        <Tool><Reload /></Tool>
        <Tool><Clock /></Tool>
        <Tool><FaCog className="size-[22px]" /></Tool>
        <Tool><Expand /></Tool>
      </div>
    </div>
  );
}

function MapPanel() {
  return (
    <section>
      <Banner />
      <div className={`relative h-[654px] overflow-hidden ${HELV}`}>
        <MapCanvas />
        <div className="absolute top-[208px] right-[14px] flex flex-col gap-[2px] rounded-[8px] bg-white/40 p-[6px]">
          <button className="flex h-[46px] w-[44px] items-center justify-center rounded-t-[4px] bg-[#4a6ea6]/85">
            <svg className="mt-[4px] size-[18px]" viewBox="0 0 18 18"><path d="M6 0h6v6h6v6h-6v6H6v-6H0V6h6z" fill="#fff" /></svg>
          </button>
          <button className="flex h-[44px] w-[44px] items-center justify-center rounded-b-[4px] bg-[#4a6ea6]/85">
            <span className="mt-[5px] h-[6px] w-[18px] bg-white" />
          </button>
        </div>
        <div className="absolute top-[352px] right-[14px] rounded-[8px] bg-white/40 p-[6px]">
          <button className="flex h-[46px] w-[44px] items-center justify-center rounded-[4px] bg-[#5d7bae]/75 text-[34px] leading-none font-bold text-white">i</button>
        </div>
        <div className="absolute top-[628px] left-[13px] h-[26px] w-[155px] rounded-t-[4px] bg-[#003c88]/30 px-[6px] pt-[4px]">
          <div className="h-[24px] border-x-2 border-white/85 text-center text-[17.500px] leading-[24px] font-bold text-white/85">100 mi</div>
        </div>
      </div>
      <Playback />
      <Banner />
    </section>
  );
}

function Tabs() {
  return (
    <nav className={`mt-[36px] flex h-[86px] w-[1524px] items-stretch text-[31px] tracking-[0.1px] text-[#333] ${THIN}`}>
      <div className="flex w-[144px] shrink-0 items-center gap-[4px] rounded-t-[8px] border-2 border-b-0 border-[#ddd] pb-[4px] pl-[25px] text-[#555]">
        <FaInfoCircle className="size-[29px] shrink-0" />Info
      </div>
      <div className="flex flex-1 items-center border-b-2 border-[#ddd] pb-[2px] pl-[32px]">
        <a className="flex w-[233px] shrink-0 items-center gap-[5px]"><Bars />Attributes</a>
        <a className="flex w-[183px] shrink-0 items-center gap-[5px]"><ShareArrow />Share</a>
        <a className="flex w-[206px] shrink-0 items-center gap-[5px]"><Star />Ratings</a>
        <a className="flex w-[264px] shrink-0 items-center gap-[13px]"><Bubble />Comments</a>
        <a className="flex shrink-0 items-center gap-[14px]"><Branch />GeoGig</a>
      </div>
    </nav>
  );
}

function Details() {
  const dt = "text-right text-[28.700px] font-bold";
  return (
    <dl className={`mt-[37px] grid grid-cols-[287px_1fr] gap-x-[36px] text-[28.900px] leading-[40px] text-[#333] ${HELV}`}>
      <dt className={dt}>Title</dt><dd>Changing Areas of ISIS Control</dd>
      <dt className={dt}>Abstract</dt><dd className={`h-[64px] pt-[3px] text-[32px] font-light ${LATO}`}>No abstract provided</dd>
      <dt className={dt}>Publication Date</dt><dd>Oct. 4, 2018, 5:12 p.m.</dd>
      <dt className={dt}>Type</dt><dd>Vector Data</dd>
    </dl>
  );
}

function Button({ children, className }) {
  return (
    <button className={`flex w-[414px] items-center justify-center rounded-[6px] border-2 pt-[1px] text-[25.300px] ${HELV} ${className}`}>{children}</button>
  );
}
const PRIMARY = "border-[#4a80b8] bg-[#528bc6] text-white";

function Sidebar() {
  const row = "border-b-2 border-[#ddd] px-[28px]";
  const copy = `text-[31.900px] leading-[38px] font-light text-[#333] ${LATO}`;
  return (
    <aside className="h-[1200px] w-[474px] shrink-0 rounded-t-[8px] border-2 border-[#ddd]">
      <div className={`${row} h-[96px] pt-[18px]`}><Button className={`h-[58px] ${PRIMARY}`}>Download Layer</Button></div>
      <div className={`${row} h-[98px] pt-[18px]`}><Button className={`h-[60px] ${PRIMARY}`}>Metadata Detail</Button></div>
      <div className={`${row} h-[96px] pt-[18px]`}><Button className={`h-[58px] ${PRIMARY}`}>Edit Layer</Button></div>
      <div className="h-[98px] border-b-4 border-[#ddd] px-[28px] pt-[18px]"><Button className="h-[60px] border-[#ccc] bg-white text-[#333]">Download Metadata</Button></div>
      <div className={`${row} h-[148px] pt-[15px]`}>
        <div className={copy}>Legend</div>
        <div className="mt-[24px] flex items-center gap-[11px] pl-[6px] font-['DejaVu_Sans',sans-serif] text-[21.800px] leading-[30px] text-[#222]">
          <span className="size-[25px] border-4 border-[#999] bg-[#e79b38]" />Single symbol
        </div>
      </div>
      <div className={`${row} h-[300px] pt-[35px]`}>
        <div className={`${copy} whitespace-nowrap`}>Create a story using this layer</div>
        <p className={`${copy} mt-[16px] mb-[17px]`}>Click the button below to<br />generate a new story based<br />on this layer.</p>
        <Button className={`h-[60px] ${PRIMARY}`}>Compose Story</Button>
      </div>
      <div className={`${row} h-[140px] pt-[16px]`}>
        <div className={`${copy} mb-[6px]`}>Use on Organization Page</div>
        <Button className={`h-[60px] ${PRIMARY}`}>Syria Research Group</Button>
      </div>
      <div className={`${row} h-[140px] pt-[16px]`}>
        <div className={`${copy} mb-[6px]`}>Use on Initiative Page</div>
        <Button className={`h-[60px] ${PRIMARY}`}>Syrian Civil War</Button>
      </div>
    </aside>
  );
}

export default function App() {
  return (
    <div className="relative h-[1424px] w-[2212px] overflow-hidden bg-white">
      <Header />
      <main className="mt-[89px] px-[124px]">
        <h1 className={`-ml-[1px] h-[59px] overflow-hidden text-[54.200px] leading-[62px] font-bold whitespace-nowrap text-[#333] ${LATO}`}>Changing Areas of ISIS Control</h1>
        <div className="mt-[16px] w-[2052px] border-b-2 border-[#eee]" />
        <div className="mt-[36px] flex w-[2052px] items-start justify-between">
          <div className="w-[1526px]">
            <MapPanel />
            <Tabs />
            <Details />
          </div>
          <Sidebar />
        </div>
      </main>
      <svg className="pointer-events-none absolute top-0 left-0 h-[1424px] w-[2212px]" viewBox="0 0 2212 1424">
        <ellipse cx="1919.500" cy="1340" rx="286" ry="84.500" fill="none" stroke="#ee4024" strokeWidth="15" />
      </svg>
    </div>
  );
}
